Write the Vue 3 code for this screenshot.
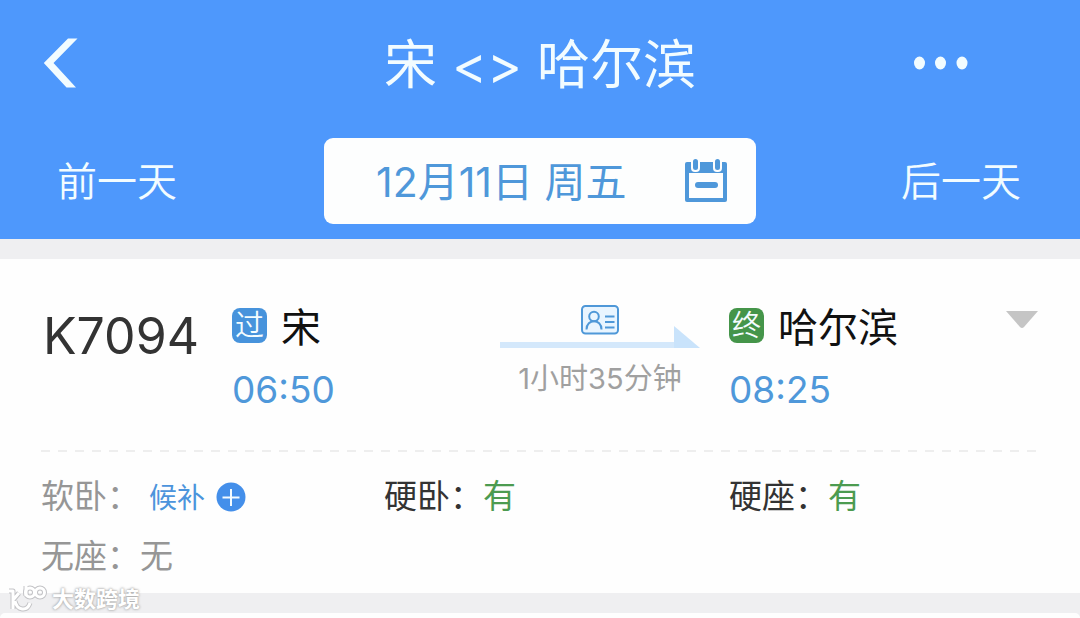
<script setup>
const seats = [
  { name: '软卧', status: '候补', kind: 'waitlist' },
  { name: '硬卧', status: '有', kind: 'available' },
  { name: '硬座', status: '有', kind: 'available' },
  { name: '无座', status: '无', kind: 'none' },
]
</script>

<template>
  <div class="page">
    <header class="header">
      <div class="title-row">
        <button class="plain back" aria-label="返回">
          <svg width="36" height="52" viewBox="0 0 36 52">
            <path d="M25 1.5H34.5L10.5 26L33 50.5H23.5L.8 26Z" fill="currentColor" />
          </svg>
        </button>
        <h1 class="title">宋 &lt;&gt; 哈尔滨</h1>
        <button class="plain more" aria-label="更多">
          <svg width="56" height="14" viewBox="0 0 56 14" fill="currentColor">
            <ellipse cx="6.5" cy="7" rx="5.5" ry="6.5" />
            <ellipse cx="27.5" cy="7" rx="5.5" ry="6.5" />
            <ellipse cx="49" cy="7" rx="5.5" ry="6.5" />
          </svg>
        </button>
      </div>
      <nav class="date-row">
        <button class="plain day">前一天</button>
        <button class="date">
          <span>12月11日 周五</span>
          <svg width="46" height="46" viewBox="0 0 46 46">
            <path d="M4 4H42a2 2 0 0 1 2 2V42a2 2 0 0 1-2 2H4a2 2 0 0 1-2-2V6a2 2 0 0 1 2-2Z" fill="currentColor" />
            <path d="M6 15H40V40H6Z" fill="#fdfefe" />
            <rect x="8" y="0" width="9" height="14" rx="4" fill="#fdfefe" />
            <rect x="30" y="0" width="9" height="14" rx="4" fill="#fdfefe" />
            <rect x="10" y="1" width="5" height="11" rx="2.500" fill="currentColor" />
            <rect x="32" y="1" width="5" height="11" rx="2.500" fill="currentColor" />
            <rect x="12" y="24" width="23" height="6" rx="3" fill="currentColor" />
          </svg>
        </button>
        <button class="plain day next">后一天</button>
      </nav>
    </header>

    <main class="list">
      <article class="card">
        <section class="route">
          <h2 class="train">K7094</h2>
          <div class="stop">
            <div class="station"><span class="badge pass">过</span>宋</div>
            <time class="time">06:50</time>
          </div>
          <div class="trip">
            <svg width="38" height="30" viewBox="0 0 38 30" fill="none" stroke="#4f98d8" stroke-width="2">
              <rect x="1" y="1" width="36" height="27.500" rx="3.500" fill="#e9f5ff" />
              <circle cx="13" cy="11.500" r="4.800" />
              <path d="M5.500 24.500C5.500 13.500 20.500 13.500 20.500 24.500M24 11.500H33.500M24 17H33.500M24 22.500H33.500" />
            </svg>
            <div class="arrow">
              <span class="line"></span>
              <svg width="26" height="22" viewBox="0 0 26 22"><path d="M0 0L26 22H0Z" fill="#c9e3fb" /></svg>
            </div>
            <span class="duration">1小时35分钟</span>
          </div>
          <div class="stop">
            <div class="station"><span class="badge end">终</span>哈尔滨</div>
            <time class="time">08:25</time>
          </div>
          <button class="plain expand" aria-label="展开">
            <svg width="32" height="18" viewBox="0 0 32 18"><path d="M0 0H32L18 16Q16 18 14 16Z" fill="#c5c5c5" /></svg>
          </button>
        </section>

        <svg class="divider" width="100%" height="2" aria-hidden="true">
          <line x1="0" y1="1" x2="100%" y2="1" stroke="#eeeeee" stroke-width="2" stroke-dasharray="9 8" />
        </svg>

        <ul class="seats">
          <li v-for="seat in seats" :key="seat.name" :class="['seat', seat.kind]">
            <span>{{ seat.name }}：</span>
            <button v-if="seat.kind === 'waitlist'" class="plain wait">
              <span>{{ seat.status }}</span>
              <svg width="30" height="30" viewBox="0 0 30 30">
                <circle cx="15" cy="15" r="14.500" fill="#448fea" />
                <path d="M6.500 15.500H23.500M15 7V24" stroke="#f4fbff" stroke-width="2" />
              </svg>
            </button>
            <span v-else class="status">{{ seat.status }}</span>
          </li>
        </ul>
      </article>
      <article class="card following"></article>
    </main>

    <div class="watermark">
      <svg width="40" height="30" viewBox="0 0 40 30" fill="none" stroke-linejoin="round">
        <g stroke="#c3c3c6" stroke-width="5">
          <path d="M2 7H6V25M6 16L12 9M8 17C10 26.500 20 28 23 19M19 2V12" />
          <circle cx="23" cy="8.500" r="4.500" /><circle cx="33" cy="8.500" r="4.500" />
        </g>
        <g stroke="#fff" stroke-width="3">
          <path d="M2 7H6V25M6 16L12 9M8 17C10 26.500 20 28 23 19M19 2V12" />
          <circle cx="23" cy="8.500" r="4.500" /><circle cx="33" cy="8.500" r="4.500" />
        </g>
      </svg>
      <span>大数跨境</span>
    </div>
  </div>
</template>

<style>
body {
  background: #efeff1;
}
</style>

<style scoped>
.page {
  position: relative;
  min-height: 100vh;
  display: flex;
  flex-direction: column;
  box-sizing: border-box;
  font-family: Inter, "Noto Sans CJK SC", sans-serif;
  font-weight: 400;
  color: #333;
}
h1, h2, ul {
  margin: 0;
  padding: 0;
  font-weight: inherit;
}
button {
  font: inherit;
  cursor: pointer;
}
svg {
  display: block;
  flex: none;
}
.plain {
  border: 0;
  padding: 0;
  background: none;
  color: inherit;
}
.header {
  background: #4e98fc;
  color: #f2fcff;
  padding-bottom: 15px;
}
.title-row {
  display: grid;
  grid-template-columns: 1fr auto 1fr;
  align-items: center;
  height: 126px;
  margin-bottom: 12px;
}
.back {
  justify-self: start;
  margin-left: 43px;
}
.title {
  padding-top: 4px;
  font-size: 53px;
  line-height: 80px;
}
.more {
  justify-self: end;
  margin-right: 111px;
}
.date-row {
  display: grid;
  grid-template-columns: 3fr 4fr 3fr;
  align-items: center;
}
.day {
  justify-self: start;
  margin-left: 57px;
  padding-top: 2px;
  font-size: 40px;
  line-height: 56px;
  font-weight: 350;
}
.next {
  justify-self: end;
  margin: 0 59px 0 0;
}
.date {
  display: flex;
  align-items: center;
  justify-content: space-between;
  height: 86px;
  padding: 0 27px 0 52px;
  border: 0;
  border-radius: 9px;
  background: #fdfefe;
  color: #4f98da;
  font-size: 41px;
  line-height: 56px;
}
.date span {
  padding-top: 2px;
}
.list {
  flex: 1;
  display: flex;
  flex-direction: column;
  gap: 20px;
  padding-top: 20px;
}
.card {
  background: #fefefe;
  padding: 0 42px 9px 41px;
}
.following {
  flex: 1;
  min-height: 4px;
  padding: 0;
  border-radius: 8px 8px 0 0;
}
.route {
  display: grid;
  grid-template-columns: 191fr 268fr 229fr 277fr 32fr;
  padding: 41px 0 30px;
}
.train {
  margin-left: 2px;
  font-size: 50px;
  line-height: 72px;
}
.station {
  display: flex;
  align-items: center;
  gap: 14px;
  height: 56px;
  font-size: 40px;
  line-height: 56px;
  color: #111;
}
.badge {
  display: flex;
  align-items: center;
  justify-content: center;
  width: 35px;
  height: 35px;
  border-radius: 8px;
  margin-bottom: 6px;
  font-size: 29px;
  line-height: 35px;
  font-weight: 350;
  color: #f4fcff;
}
.pass {
  background: #4793dc;
}
.end {
  background: #45954a;
}
.time {
  display: block;
  margin-top: 4px;
  font-size: 37px;
  line-height: 60px;
  color: #4f98da;
}
.trip {
  display: flex;
  flex-direction: column;
  align-items: center;
  margin-right: 29px;
  padding-top: 5px;
}
.arrow {
  display: flex;
  align-items: flex-end;
  align-self: stretch;
  margin-top: -9px;
}
.line {
  flex: 1;
  height: 6px;
  background: #d4e8fb;
}
.duration {
  margin-top: 11px;
  font-size: 29px;
  line-height: 40px;
  color: #a0a0a0;
  white-space: nowrap;
}
.expand {
  justify-self: end;
  align-self: start;
  margin-top: 11px;
}
.seats {
  list-style: none;
  display: grid;
  grid-template-columns: 343fr 345fr 309fr;
  row-gap: 4px;
  padding-top: 16px;
}
.seat {
  display: flex;
  align-items: center;
  height: 56px;
  font-size: 33px;
  line-height: 48px;
}
.waitlist, .none {
  color: #969696;
}
.available .status {
  color: #4c9b50;
}
.wait {
  display: flex;
  align-items: center;
  gap: 11px;
  margin-left: 9px;
  padding-top: 2px;
  font-size: 28px;
  color: #4c94dc;
}
.wait span {
  padding-top: 2px;
}
.watermark {
  position: absolute;
  left: 7px;
  bottom: 4px;
  display: flex;
  align-items: center;
  gap: 5px;
  font-size: 22px;
  line-height: 30px;
  font-weight: 700;
  color: #fff;
  text-shadow: 0 0 2px #aaa, 0 0 3px #aaa;
}
</style>
